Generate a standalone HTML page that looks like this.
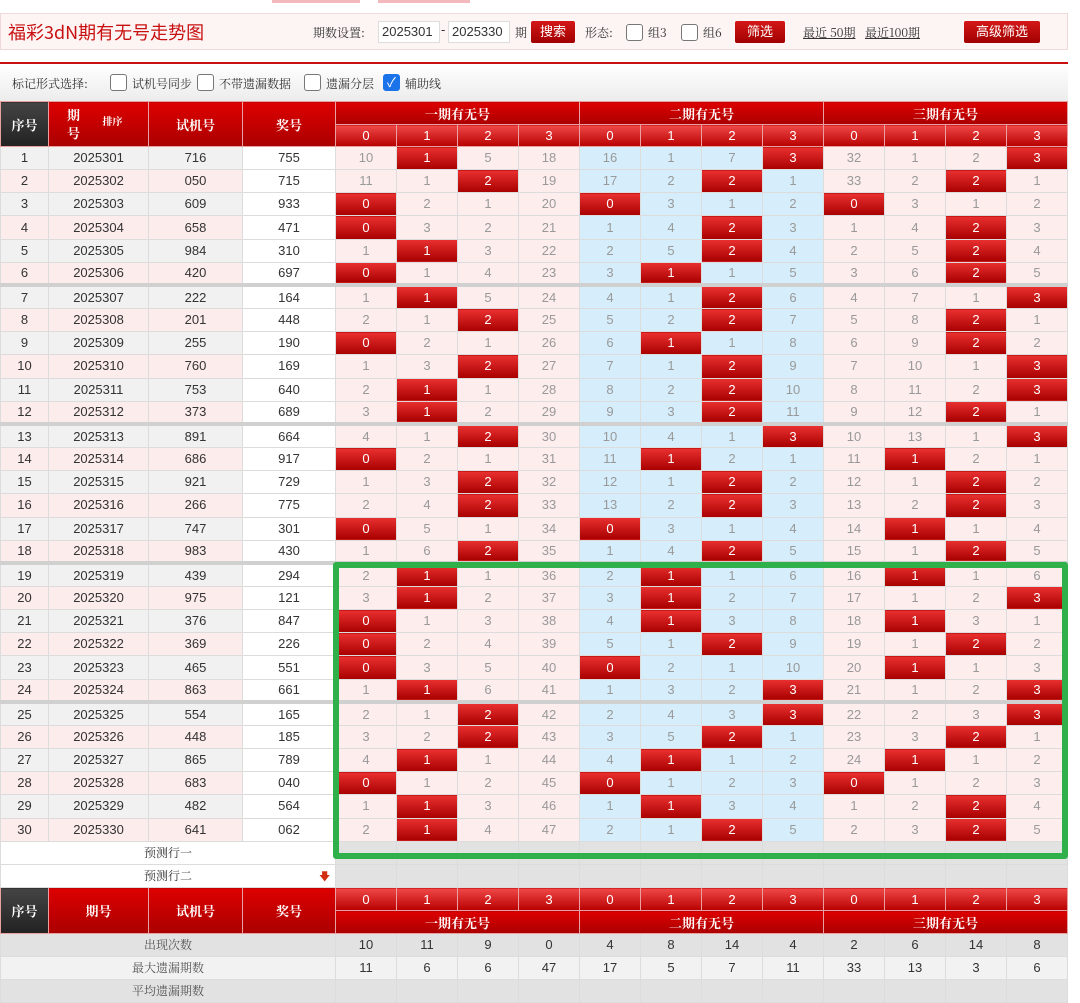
<!DOCTYPE html><html><head><meta charset="utf-8"><style>
*{margin:0;padding:0;box-sizing:border-box}
body{width:1080px;height:986px;overflow:hidden;background:#fff;font-family:"Liberation Sans","Noto Sans CJK SC",sans-serif;font-size:13px;color:#333;position:relative}
.abs{position:absolute}
.bar{left:0;top:13px;width:1068px;height:37px;background:#fdf4f4;border:1px solid #efd9d9}
.title{left:8px;top:19px;font-size:18px;color:#c81010;font-family:"Noto Sans CJK SC",sans-serif}
.lbl{font-size:12px;color:#333;font-family:"Noto Serif CJK SC",serif}
.inp{background:#fff;border:1px solid #ddd;height:22px;font-size:13px;line-height:20px;padding-left:3px}
.btn{background:linear-gradient(#d41818,#a00000);color:#fff;font-size:13px;text-align:center;line-height:22px;height:22px;border-radius:2px}
.cb{width:17px;height:17px;border:1px solid #777;border-radius:3px;background:#fff}
.opt{left:0;top:62px;width:1068px;height:39px;border-top:2px solid #c81010;background:linear-gradient(#fff,#ececec)}
table{position:absolute;left:0;top:101px;border-collapse:collapse;table-layout:fixed;width:1067px}
td{height:23.16px;text-align:center;border:1px solid #dcdcdc;padding:0;font-size:13px;line-height:20px;overflow:hidden;white-space:nowrap}
th{color:#fff;font-weight:bold;font-family:"Noto Serif CJK SC",serif;font-size:13px;border:1px solid #e8a0a0;background:linear-gradient(#d00,#a00);padding:0}
th.dk{background:linear-gradient(#444,#222)}
th.d{background:linear-gradient(#f04848,#b80000);font-weight:normal;font-family:"Liberation Sans",sans-serif;height:22px}
th.g{height:23px}
th.e{height:23px}
tbody.dt td{color:#999}
tbody.dt td:nth-child(-n+4){color:#333}
tbody.dt td:nth-child(n+5){background:#fdeded}
tbody.dt td:nth-child(n+9):nth-child(-n+12){background:#d6edfb}
tbody.dt tr:nth-child(odd) td:nth-child(-n+3){background:#f1f1f1}
tbody.dt tr:nth-child(even) td:nth-child(-n+3){background:#fdecec}
tbody.dt td:nth-child(4){background:#fff}
tbody.dt td.r{background:linear-gradient(#ea3030,#a80000)!important;color:#fff}
tr.s td{border-bottom:4px solid #d0d0d0}
.pr td{background:#e2e2e2;color:#333}
.pr td.w{background:#fff;font-family:"Noto Serif CJK SC",serif;font-size:12px}
.st td{background:#f2f2f2;color:#333}
.st td.l{font-family:"Noto Serif CJK SC",serif;font-size:12px;color:#555}
.st.a td{background:#e2e2e2}
.green{left:333px;top:562px;width:735px;height:297px;border:6px solid #2fb04a;border-radius:3px}
</style></head><body>
<div class="abs" style="left:272px;top:0;width:88px;height:3px;background:#f2b8bd"></div>
<div class="abs" style="left:378px;top:0;width:92px;height:3px;background:#f2b8bd"></div>
<div class="abs bar"></div>
<div class="abs title">福彩3dN期有无号走势图</div>
<div class="abs lbl" style="left:313px;top:24px">期数设置:</div>
<div class="abs inp" style="left:378px;top:21px;width:62px">2025301</div>
<div class="abs" style="left:441px;top:22px">-</div>
<div class="abs inp" style="left:448px;top:21px;width:62px">2025330</div>
<div class="abs lbl" style="left:515px;top:24px">期</div>
<div class="abs btn" style="left:531px;top:21px;width:44px">搜索</div>
<div class="abs lbl" style="left:585px;top:24px">形态:</div>
<div class="abs cb" style="left:626px;top:24px"></div>
<div class="abs lbl" style="left:648px;top:24px">组3</div>
<div class="abs cb" style="left:681px;top:24px"></div>
<div class="abs lbl" style="left:703px;top:24px">组6</div>
<div class="abs btn" style="left:735px;top:21px;width:50px">筛选</div>
<div class="abs lbl" style="left:803px;top:24px;text-decoration:underline">最近 50期</div>
<div class="abs lbl" style="left:865px;top:24px;text-decoration:underline">最近100期</div>
<div class="abs btn" style="left:964px;top:21px;width:76px">高级筛选</div>
<div class="abs opt"></div>
<div class="abs lbl" style="left:12px;top:75px">标记形式选择:</div>
<div class="abs cb" style="left:110px;top:74px"></div><div class="abs lbl" style="left:132px;top:75px">试机号同步</div>
<div class="abs cb" style="left:197px;top:74px"></div><div class="abs lbl" style="left:219px;top:75px">不带遗漏数据</div>
<div class="abs cb" style="left:304px;top:74px"></div><div class="abs lbl" style="left:326px;top:75px">遗漏分层</div>
<div class="abs cb" style="left:383px;top:74px;background:#1a73e8;border-color:#1a73e8;color:#fff;font-size:13px;line-height:15px;text-align:center">✓</div><div class="abs lbl" style="left:405px;top:75px">辅助线</div>
<table>
<colgroup><col style="width:48px"><col style="width:100px"><col style="width:94px"><col style="width:93px"><col span="12" style="width:61px"></colgroup>
<thead>
<tr><th class="dk" rowspan="2">序号</th><th rowspan="2" style="text-align:left;padding-left:18px;line-height:18px">期<br>号<span style="position:absolute;left:102px;top:10px;font-size:10px">排序</span></th><th rowspan="2">试机号</th><th rowspan="2">奖号</th><th colspan="4" class="g">一期有无号</th><th colspan="4">二期有无号</th><th colspan="4">三期有无号</th></tr>
<tr><th class="d">0</th><th class="d">1</th><th class="d">2</th><th class="d">3</th><th class="d">0</th><th class="d">1</th><th class="d">2</th><th class="d">3</th><th class="d">0</th><th class="d">1</th><th class="d">2</th><th class="d">3</th></tr>
</thead>
<tbody class="dt">
<tr><td>1</td><td>2025301</td><td>716</td><td>755</td><td>10</td><td class=r>1</td><td>5</td><td>18</td><td>16</td><td>1</td><td>7</td><td class=r>3</td><td>32</td><td>1</td><td>2</td><td class=r>3</td></tr>
<tr><td>2</td><td>2025302</td><td>050</td><td>715</td><td>11</td><td>1</td><td class=r>2</td><td>19</td><td>17</td><td>2</td><td class=r>2</td><td>1</td><td>33</td><td>2</td><td class=r>2</td><td>1</td></tr>
<tr><td>3</td><td>2025303</td><td>609</td><td>933</td><td class=r>0</td><td>2</td><td>1</td><td>20</td><td class=r>0</td><td>3</td><td>1</td><td>2</td><td class=r>0</td><td>3</td><td>1</td><td>2</td></tr>
<tr><td>4</td><td>2025304</td><td>658</td><td>471</td><td class=r>0</td><td>3</td><td>2</td><td>21</td><td>1</td><td>4</td><td class=r>2</td><td>3</td><td>1</td><td>4</td><td class=r>2</td><td>3</td></tr>
<tr><td>5</td><td>2025305</td><td>984</td><td>310</td><td>1</td><td class=r>1</td><td>3</td><td>22</td><td>2</td><td>5</td><td class=r>2</td><td>4</td><td>2</td><td>5</td><td class=r>2</td><td>4</td></tr>
<tr class="s"><td>6</td><td>2025306</td><td>420</td><td>697</td><td class=r>0</td><td>1</td><td>4</td><td>23</td><td>3</td><td class=r>1</td><td>1</td><td>5</td><td>3</td><td>6</td><td class=r>2</td><td>5</td></tr>
<tr><td>7</td><td>2025307</td><td>222</td><td>164</td><td>1</td><td class=r>1</td><td>5</td><td>24</td><td>4</td><td>1</td><td class=r>2</td><td>6</td><td>4</td><td>7</td><td>1</td><td class=r>3</td></tr>
<tr><td>8</td><td>2025308</td><td>201</td><td>448</td><td>2</td><td>1</td><td class=r>2</td><td>25</td><td>5</td><td>2</td><td class=r>2</td><td>7</td><td>5</td><td>8</td><td class=r>2</td><td>1</td></tr>
<tr><td>9</td><td>2025309</td><td>255</td><td>190</td><td class=r>0</td><td>2</td><td>1</td><td>26</td><td>6</td><td class=r>1</td><td>1</td><td>8</td><td>6</td><td>9</td><td class=r>2</td><td>2</td></tr>
<tr><td>10</td><td>2025310</td><td>760</td><td>169</td><td>1</td><td>3</td><td class=r>2</td><td>27</td><td>7</td><td>1</td><td class=r>2</td><td>9</td><td>7</td><td>10</td><td>1</td><td class=r>3</td></tr>
<tr><td>11</td><td>2025311</td><td>753</td><td>640</td><td>2</td><td class=r>1</td><td>1</td><td>28</td><td>8</td><td>2</td><td class=r>2</td><td>10</td><td>8</td><td>11</td><td>2</td><td class=r>3</td></tr>
<tr class="s"><td>12</td><td>2025312</td><td>373</td><td>689</td><td>3</td><td class=r>1</td><td>2</td><td>29</td><td>9</td><td>3</td><td class=r>2</td><td>11</td><td>9</td><td>12</td><td class=r>2</td><td>1</td></tr>
<tr><td>13</td><td>2025313</td><td>891</td><td>664</td><td>4</td><td>1</td><td class=r>2</td><td>30</td><td>10</td><td>4</td><td>1</td><td class=r>3</td><td>10</td><td>13</td><td>1</td><td class=r>3</td></tr>
<tr><td>14</td><td>2025314</td><td>686</td><td>917</td><td class=r>0</td><td>2</td><td>1</td><td>31</td><td>11</td><td class=r>1</td><td>2</td><td>1</td><td>11</td><td class=r>1</td><td>2</td><td>1</td></tr>
<tr><td>15</td><td>2025315</td><td>921</td><td>729</td><td>1</td><td>3</td><td class=r>2</td><td>32</td><td>12</td><td>1</td><td class=r>2</td><td>2</td><td>12</td><td>1</td><td class=r>2</td><td>2</td></tr>
<tr><td>16</td><td>2025316</td><td>266</td><td>775</td><td>2</td><td>4</td><td class=r>2</td><td>33</td><td>13</td><td>2</td><td class=r>2</td><td>3</td><td>13</td><td>2</td><td class=r>2</td><td>3</td></tr>
<tr><td>17</td><td>2025317</td><td>747</td><td>301</td><td class=r>0</td><td>5</td><td>1</td><td>34</td><td class=r>0</td><td>3</td><td>1</td><td>4</td><td>14</td><td class=r>1</td><td>1</td><td>4</td></tr>
<tr class="s"><td>18</td><td>2025318</td><td>983</td><td>430</td><td>1</td><td>6</td><td class=r>2</td><td>35</td><td>1</td><td>4</td><td class=r>2</td><td>5</td><td>15</td><td>1</td><td class=r>2</td><td>5</td></tr>
<tr><td>19</td><td>2025319</td><td>439</td><td>294</td><td>2</td><td class=r>1</td><td>1</td><td>36</td><td>2</td><td class=r>1</td><td>1</td><td>6</td><td>16</td><td class=r>1</td><td>1</td><td>6</td></tr>
<tr><td>20</td><td>2025320</td><td>975</td><td>121</td><td>3</td><td class=r>1</td><td>2</td><td>37</td><td>3</td><td class=r>1</td><td>2</td><td>7</td><td>17</td><td>1</td><td>2</td><td class=r>3</td></tr>
<tr><td>21</td><td>2025321</td><td>376</td><td>847</td><td class=r>0</td><td>1</td><td>3</td><td>38</td><td>4</td><td class=r>1</td><td>3</td><td>8</td><td>18</td><td class=r>1</td><td>3</td><td>1</td></tr>
<tr><td>22</td><td>2025322</td><td>369</td><td>226</td><td class=r>0</td><td>2</td><td>4</td><td>39</td><td>5</td><td>1</td><td class=r>2</td><td>9</td><td>19</td><td>1</td><td class=r>2</td><td>2</td></tr>
<tr><td>23</td><td>2025323</td><td>465</td><td>551</td><td class=r>0</td><td>3</td><td>5</td><td>40</td><td class=r>0</td><td>2</td><td>1</td><td>10</td><td>20</td><td class=r>1</td><td>1</td><td>3</td></tr>
<tr class="s"><td>24</td><td>2025324</td><td>863</td><td>661</td><td>1</td><td class=r>1</td><td>6</td><td>41</td><td>1</td><td>3</td><td>2</td><td class=r>3</td><td>21</td><td>1</td><td>2</td><td class=r>3</td></tr>
<tr><td>25</td><td>2025325</td><td>554</td><td>165</td><td>2</td><td>1</td><td class=r>2</td><td>42</td><td>2</td><td>4</td><td>3</td><td class=r>3</td><td>22</td><td>2</td><td>3</td><td class=r>3</td></tr>
<tr><td>26</td><td>2025326</td><td>448</td><td>185</td><td>3</td><td>2</td><td class=r>2</td><td>43</td><td>3</td><td>5</td><td class=r>2</td><td>1</td><td>23</td><td>3</td><td class=r>2</td><td>1</td></tr>
<tr><td>27</td><td>2025327</td><td>865</td><td>789</td><td>4</td><td class=r>1</td><td>1</td><td>44</td><td>4</td><td class=r>1</td><td>1</td><td>2</td><td>24</td><td class=r>1</td><td>1</td><td>2</td></tr>
<tr><td>28</td><td>2025328</td><td>683</td><td>040</td><td class=r>0</td><td>1</td><td>2</td><td>45</td><td class=r>0</td><td>1</td><td>2</td><td>3</td><td class=r>0</td><td>1</td><td>2</td><td>3</td></tr>
<tr><td>29</td><td>2025329</td><td>482</td><td>564</td><td>1</td><td class=r>1</td><td>3</td><td>46</td><td>1</td><td class=r>1</td><td>3</td><td>4</td><td>1</td><td>2</td><td class=r>2</td><td>4</td></tr>
<tr><td>30</td><td>2025330</td><td>641</td><td>062</td><td>2</td><td class=r>1</td><td>4</td><td>47</td><td>2</td><td>1</td><td class=r>2</td><td>5</td><td>2</td><td>3</td><td class=r>2</td><td>5</td></tr>
</tbody>
<tbody class="pr">
<tr><td class="w" colspan="4">预测行一</td><td></td><td></td><td></td><td></td><td></td><td></td><td></td><td></td><td></td><td></td><td></td><td></td></tr>
<tr><td class="w" colspan="4" style="position:relative">预测行二<span style="position:absolute;left:318px;top:1px;color:#d03010;font-size:11px">🡇</span></td><td></td><td></td><td></td><td></td><td></td><td></td><td></td><td></td><td></td><td></td><td></td><td></td></tr>
</tbody>
<tbody>
<tr><th class="dk" rowspan="2">序号</th><th rowspan="2">期号</th><th rowspan="2">试机号</th><th rowspan="2">奖号</th><th class="d e">0</th><th class="d">1</th><th class="d">2</th><th class="d">3</th><th class="d">0</th><th class="d">1</th><th class="d">2</th><th class="d">3</th><th class="d">0</th><th class="d">1</th><th class="d">2</th><th class="d">3</th></tr>
<tr><th colspan="4" class="g">一期有无号</th><th colspan="4">二期有无号</th><th colspan="4">三期有无号</th></tr>
</tbody>
<tbody>
<tr class="st a"><td class="l" colspan="4">出现次数</td><td>10</td><td>11</td><td>9</td><td>0</td><td>4</td><td>8</td><td>14</td><td>4</td><td>2</td><td>6</td><td>14</td><td>8</td></tr>
<tr class="st"><td class="l" colspan="4">最大遗漏期数</td><td>11</td><td>6</td><td>6</td><td>47</td><td>17</td><td>5</td><td>7</td><td>11</td><td>33</td><td>13</td><td>3</td><td>6</td></tr>
<tr class="st a"><td class="l" colspan="4">平均遗漏期数</td><td></td><td></td><td></td><td></td><td></td><td></td><td></td><td></td><td></td><td></td><td></td><td></td></tr>
</tbody>
</table>
<div class="abs green"></div>
</body></html>
